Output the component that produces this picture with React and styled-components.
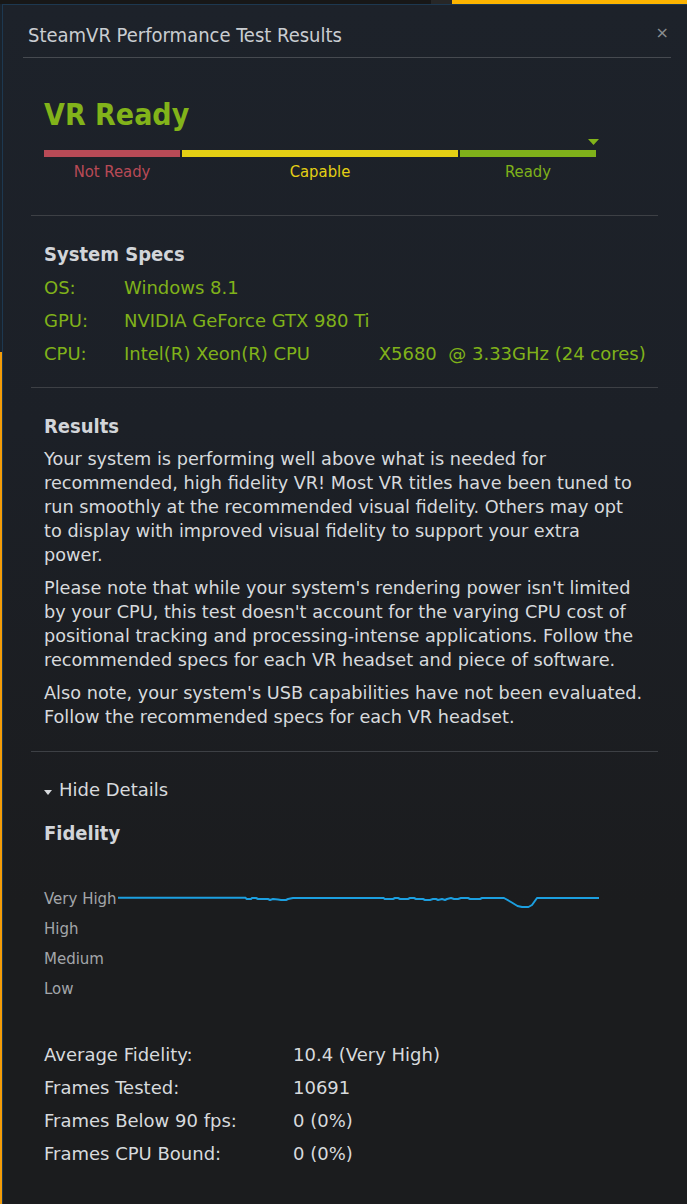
import React from "react";
import styled, { createGlobalStyle } from "styled-components";

const COND = '"DejaVu Sans Condensed", "DejaVu Sans", sans-serif';
const BODY = '"DejaVu Sans", "Liberation Sans", sans-serif';

const Global = createGlobalStyle`
  html, body { margin: 0; padding: 0; background: #161616; }
  body { font-family: ${BODY}; overflow: hidden; }
  * { box-sizing: border-box; }
`;

const Page = styled.div`
  width: 687px;
  height: 1204px;
  display: flex;
  flex-direction: column;
`;

const TopStrip = styled.div`
  display: flex;
  height: 4px;
  flex: none;
`;

const StripSeg = styled.div`
  width: ${(p) => (p.$w ? `${p.$w}px` : "auto")};
  flex: ${(p) => (p.$w ? "none" : "1")};
  background: ${(p) => p.$c};
`;

const Main = styled.div`
  flex: 1;
  display: flex;
  min-height: 0;
`;

const Edge = styled.div`
  width: ${(p) => p.$w}px;
  flex: none;
  display: flex;
  flex-direction: column;
`;

const EdgeSeg = styled.div`
  height: ${(p) => (p.$h ? `${p.$h}px` : "auto")};
  flex: ${(p) => (p.$h ? "none" : "1")};
  background: ${(p) => p.$c};
`;

const Window = styled.div`
  flex: 1;
  border-top: 1px solid #1d3850;
  border-left: 1px solid #1d3850;
  background: linear-gradient(180deg, #1d222a 0%, #1c2027 35%, #1b1c1e 75%, #1b1c1e 100%);
  display: flex;
  flex-direction: column;
`;

const TitleBar = styled.div`
  height: 53px;
  display: flex;
  align-items: center;
  justify-content: space-between;
  margin: 0 16px 0 20px;
  padding: 7px 2px 0 5px;
  border-bottom: 1px solid #464a50;
`;

const Title = styled.div`
  font-family: ${COND};
  font-size: 20px;
  color: #c9cdd1;
`;

const Close = styled.div`
  font-size: 16px;
  color: #8a8d90;
  line-height: 1;
  margin-top: -3px;
`;

const Section = styled.section`
  margin: 0 29px 0 28px;
  padding: ${(p) => p.$pad};
  border-bottom: ${(p) => (p.$last ? "none" : "1px solid #3d4045")};
`;

const Inner = styled.div`
  padding-left: 13px;
`;

const BigStatus = styled.div`
  font-family: ${COND};
  font-size: 30px;
  font-weight: bold;
  line-height: 36px;
  color: #82b31a;
`;

const RatingWrap = styled.div`
  width: 552px;
  margin-top: 6px;
`;

const MarkerRow = styled.div`
  display: flex;
  justify-content: flex-end;
  height: 6px;
  margin-right: -3px;
  margin-bottom: 5px;
`;

const RatingGrid = styled.div`
  display: grid;
  grid-template-columns: 136px 276px 136px;
  column-gap: 2px;
`;

const Bar = styled.div`
  height: 7px;
  background: ${(p) => p.$c};
`;

const BarLabel = styled.div`
  font-family: ${COND};
  text-align: center;
  font-size: 16.5px;
  line-height: 20px;
  margin-top: 5px;
  color: ${(p) => p.$c};
`;

const Heading = styled.div`
  font-family: ${COND};
  font-size: 20px;
  font-weight: bold;
  line-height: 24px;
  color: #d2d5d9;
  margin-top: ${(p) => p.$mt || 0}px;
`;

const SpecList = styled.div`
  margin-top: 5px;
`;

const SpecRow = styled.div`
  display: grid;
  grid-template-columns: 80px 1fr;
  font-size: 18px;
  line-height: 33px;
  color: #80b21a;
  white-space: pre;
`;

const Para = styled.p`
  margin: 9px 0 0 0;
  font-size: 17.7px;
  line-height: 24px;
  color: #d7dadd;
  width: 602px;
`;

const Toggle = styled.div`
  display: flex;
  align-items: center;
  gap: 7px;
  font-size: 18px;
  line-height: 24px;
  color: #d7dadd;
`;

const Chart = styled.div`
  display: flex;
  margin-top: 39px;
`;

const ChartLabels = styled.div`
  width: 74px;
  flex: none;
  display: flex;
  flex-direction: column;
`;

const ChartLabel = styled.div`
  font-size: 15px;
  line-height: 30px;
  color: #a3a6aa;
  white-space: nowrap;
`;

const Stats = styled.div`
  margin-top: 34px;
`;

const StatRow = styled.div`
  display: grid;
  grid-template-columns: 249px 1fr;
  font-size: 18px;
  line-height: 33px;
  color: #d7dadd;
`;

const linePath =
  "M0 13.7 L127.6 13.7 L128.5 15 L133 15 L134 14 L138 14 L140 15 L150 15 L152 16 L155 15 L160 15.5 L163 16 L168 16 L170 15 L175 14 L265.8 14 L266.5 15 L275 15 L277 14 L280 14 L282 15 L290 15 L292 14 L296 14 L298 15 L305 15 L307 16 L312 16 L315 15 L318 15 L320 16 L324 15 L327 16 L329 15 L333 14 L336 15 L340 15 L343 14 L350 14 L352 15 L362 15 L364 14 L386 14 L393 18 L399.5 22 L404 23 L410.5 23 L414 21 L419 14 L481 14";

const specs = [
  ["OS:", "Windows 8.1"],
  ["GPU:", "NVIDIA GeForce GTX 980 Ti"],
  ["CPU:", "Intel(R) Xeon(R) CPU            X5680  @ 3.33GHz (24 cores)"],
];

const stats = [
  ["Average Fidelity:", "10.4 (Very High)"],
  ["Frames Tested:", "10691"],
  ["Frames Below 90 fps:", "0 (0%)"],
  ["Frames CPU Bound:", "0 (0%)"],
];

export default function App() {
  return (
    <Page>
      <Global />
      <TopStrip>
        <StripSeg $w={431} $c="#171717" />
        <StripSeg $w={21} $c="#272727" />
        <StripSeg $c="#fdb400" />
      </TopStrip>
      <Main>
        <Edge $w={2}>
          <EdgeSeg $h={348} $c="#1a222b" />
          <EdgeSeg $c="#f39c09" />
        </Edge>
        <Window>
          <TitleBar>
            <Title>SteamVR Performance Test Results</Title>
            <Close>×</Close>
          </TitleBar>

          <Section $pad="39px 0 33px 0">
            <Inner>
              <BigStatus>VR Ready</BigStatus>
              <RatingWrap>
                <MarkerRow>
                  <svg width="11" height="6" viewBox="0 0 11 6">
                    <path d="M0 0 L11 0 L5.5 6 Z" fill="#82b31a" />
                  </svg>
                </MarkerRow>
                <RatingGrid>
                  <Bar $c="#b84a56" />
                  <Bar $c="#e4cf14" />
                  <Bar $c="#7fb11a" />
                  <BarLabel $c="#b84a56">Not Ready</BarLabel>
                  <BarLabel $c="#e4cf14">Capable</BarLabel>
                  <BarLabel $c="#7fb11a">Ready</BarLabel>
                </RatingGrid>
              </RatingWrap>
            </Inner>
          </Section>

          <Section $pad="26px 0 17px 0">
            <Inner>
              <Heading>System Specs</Heading>
              <SpecList>
                {specs.map(([k, v]) => (
                  <SpecRow key={k}>
                    <span>{k}</span>
                    <span>{v}</span>
                  </SpecRow>
                ))}
              </SpecList>
            </Inner>
          </Section>

          <Section $pad="26px 0 22px 0">
            <Inner>
              <Heading>Results</Heading>
              <Para>
                Your system is performing well above what is needed for recommended, high fidelity VR! Most VR
                titles have been tuned to run smoothly at the recommended visual fidelity. Others may opt to
                display with improved visual fidelity to support your extra
                <br />
                power.
              </Para>
              <Para>
                Please note that while your system's rendering power isn't limited by your CPU, this test doesn't
                account for the varying CPU cost of positional tracking and processing-intense applications.
                Follow the recommended specs for each VR headset and piece of software.
              </Para>
              <Para>
                Also note, your system's USB capabilities have not been evaluated. Follow the recommended specs
                for each VR headset.
              </Para>
            </Inner>
          </Section>

          <Section $pad="26px 0 0 0" $last>
            <Inner>
              <Toggle>
                <svg width="8" height="5" viewBox="0 0 8 5" style={{ marginTop: 4 }}>
                  <path d="M0 0 L8 0 L4 5 Z" fill="#d7dadd" />
                </svg>
                <span>Hide Details</span>
              </Toggle>
              <Heading $mt={19}>Fidelity</Heading>
              <Chart>
                <ChartLabels>
                  <ChartLabel>Very High</ChartLabel>
                  <ChartLabel>High</ChartLabel>
                  <ChartLabel>Medium</ChartLabel>
                  <ChartLabel>Low</ChartLabel>
                </ChartLabels>
                <svg width="482" height="120" viewBox="0 0 482 120">
                  <path d={linePath} fill="none" stroke="#1c9fe0" strokeWidth="2" strokeLinejoin="round" />
                </svg>
              </Chart>
              <Stats>
                {stats.map(([k, v]) => (
                  <StatRow key={k}>
                    <span>{k}</span>
                    <span>{v}</span>
                  </StatRow>
                ))}
              </Stats>
            </Inner>
          </Section>
        </Window>
      </Main>
    </Page>
  );
}
